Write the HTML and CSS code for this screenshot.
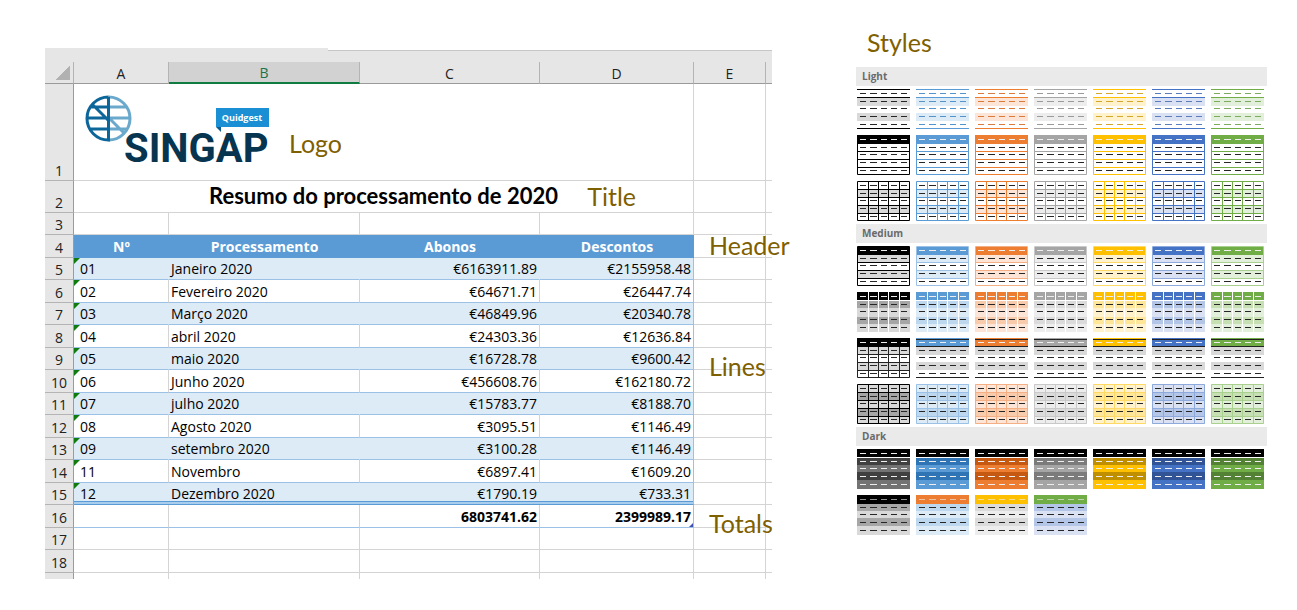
FILE: index.html
```html
<!DOCTYPE html>
<html lang="pt">
<head>
<meta charset="utf-8">
<title>Resumo do processamento de 2020</title>
<link rel="stylesheet" href="styles.css">
</head>
<body>
<svg class="defs" aria-hidden="true">
  <defs>
    <path id="d1" d="M3 4.5h6m4 0h7m4 0h6m4 0h6m4 0h6"/>
    <path id="body-dashes" d="M3 12.5h6m4 0h7m4 0h6m4 0h6m4 0h6M3 19.5h6m4 0h7m4 0h6m4 0h6m4 0h6M3 27.5h6m4 0h7m4 0h6m4 0h6m4 0h6M3 35.5h6m4 0h7m4 0h6m4 0h6m4 0h6"/>
    <path id="grid" d="M.5 .5h52v39h-52zM0 8.5h53M0 16.5h53M0 24.5h53M0 32.5h53M11.5 0v40M21.5 0v40M31.5 0v40M42.5 0v40"/>
    <symbol id="light1" viewBox="0 0 53 40">
      <path class="fill-l" d="M0 9h53v8H0zM0 24h53v8H0z"/>
      <path class="line-c" d="M0 .5h53M0 8.5h53M0 39.5h53"/>
      <use href="#d1" class="dash-t"/><use href="#body-dashes" class="dash-t"/>
    </symbol>
    <symbol id="light2" viewBox="0 0 53 40">
      <path class="fill-c" d="M0 0h53v9H0z"/>
      <path class="line-c" d="M.5 .5h52v39h-52zM0 16.5h53M0 24.5h53M0 32.5h53"/>
      <use href="#d1" class="dash-w"/><use href="#body-dashes" class="dash-k"/>
    </symbol>
    <symbol id="light3" viewBox="0 0 53 40">
      <path class="fill-l" d="M0 9h53v8H0zM0 24h53v8H0z"/>
      <use href="#grid" class="line-c"/>
      <use href="#d1" class="dash-k"/><use href="#body-dashes" class="dash-k"/>
    </symbol>
    <symbol id="medium1" viewBox="0 0 53 40">
      <path class="fill-l" d="M0 9h53v8H0zM0 24h53v8H0z"/>
      <path class="line-b" d="M.5 .5h52v39h-52zM0 16.5h53M0 24.5h53M0 32.5h53"/>
      <path class="fill-c" d="M1 1h51v8H1z"/>
      <use href="#d1" class="dash-w"/><use href="#body-dashes" class="dash-k"/>
    </symbol>
    <symbol id="medium2" viewBox="0 0 53 40">
      <path class="fill-l" d="M0 8h53v32H0z"/>
      <path class="fill-m" d="M0 9h53v7H0zM0 25h53v7H0z"/>
      <path class="fill-c" d="M0 0h53v8H0z"/>
      <path class="line-w" d="M0 8.5h53M11.5 0v40M21.5 0v40M31.5 0v40M42.5 0v40"/>
      <use href="#d1" class="dash-w"/><use href="#body-dashes" class="dash-k"/>
    </symbol>
    <symbol id="medium3" viewBox="0 0 53 40">
      <path class="fill-g" d="M0 9h53v8H0zM0 24h53v8H0z"/>
      <path class="fill-c" d="M0 0h53v9H0z"/>
      <path class="line-k" d="M0 1.5h53M0 8.5h53M0 39.5h53"/>
      <use href="#d1" class="dash-w"/><use href="#body-dashes" class="dash-k"/>
    </symbol>
    <symbol id="medium3-grid" viewBox="0 0 53 40">
      <path class="fill-g" d="M0 9h53v8H0zM0 24h53v8H0z"/>
      <use href="#grid" class="line-k"/>
      <path class="fill-c" d="M0 0h53v9H0z"/>
      <use href="#d1" class="dash-w"/><use href="#body-dashes" class="dash-k"/>
    </symbol>
    <symbol id="medium4" viewBox="0 0 53 40">
      <path class="fill-l" d="M0 0h53v40H0z"/>
      <path class="fill-m" d="M0 8h53v8H0zM0 24h53v8H0z"/>
      <use href="#grid" class="line-b"/>
      <use href="#d1" class="dash-k"/><use href="#body-dashes" class="dash-k"/>
    </symbol>
    <symbol id="dark1" viewBox="0 0 53 40">
      <path class="fill-e" d="M0 9h53v31H0z"/>
      <path class="fill-d" d="M0 9h53v7H0zM0 23h53v8H0z"/>
      <path d="M0 0h53v8H0z"/>
      <use href="#d1" class="dash-w"/><use href="#body-dashes" class="dash-w"/>
    </symbol>
    <symbol id="dark2" viewBox="0 0 53 40">
      <path class="fill-l" d="M0 9h53v31H0z"/>
      <path class="fill-m" d="M0 9h53v7H0zM0 23h53v8H0z"/>
      <path class="fill-h" d="M0 0h53v9H0z"/>
      <use href="#d1" class="dash-w dim"/><use href="#body-dashes" class="dash-k"/>
    </symbol>
  </defs>
</svg>
<main class="page">
  <section class="sheet">
    <table>
      <colgroup><col class="c-num"><col class="c-a"><col class="c-b"><col class="c-c"><col class="c-d"><col class="c-e"><col></colgroup>
      <thead>
        <tr class="strip"><td colspan="7"></td></tr>
        <tr class="letters"><th class="corner"></th><th>A</th><th class="active">B</th><th>C</th><th>D</th><th>E</th><th></th></tr>
      </thead>
      <tbody>
        <tr class="logo-row"><th>1</th><td colspan="4">
          <div class="brand">
            <svg class="logo" width="190" height="84" viewBox="0 0 190 84" role="img" aria-label="Quidgest SINGAP">
              <g fill="none" stroke-width="3">
                <path stroke="#6aa9cb" d="M24.500 5a21.500 21.500 0 0 1 0 43M25 15h17M25 26h21M25 37h17M25 26l16 16"/>
                <path stroke="#0c6699" d="M24.500 5a21.500 21.500 0 0 0 0 43V5M24 15H7M24 26H3M24 37H7M8 12l16 16"/>
              </g>
              <text class="logo-name" x="40" y="70">SINGAP</text>
              <path fill="#1a8fd4" d="M132 16h53v19h-53z"/>
              <path fill="#0d5c91" d="M132 35h5v5z"/>
              <text class="logo-tag" x="158" y="29" text-anchor="middle">Quidgest</text>
            </svg>
            <span class="note">Logo</span>
          </div></td><td></td><td></td></tr>
        <tr class="title-row"><th>2</th><td colspan="4">Resumo do processamento de 2020<span class="note over title-note">Title</span></td><td></td><td></td></tr>
        <tr class="gap-row"><th>3</th><td></td><td></td><td></td><td></td><td></td><td></td></tr>
        <tr class="head"><th>4</th><th scope="col">Nº</th><th scope="col">Processamento</th><th scope="col">Abonos</th><th scope="col">Descontos</th><td><span class="note over">Header</span></td><td></td></tr>
        <tr class="line band"><th>5</th><td>01</td><td>Janeiro 2020</td><td>€6163911.89</td><td>€2155958.48</td><td></td><td></td></tr>
        <tr class="line"><th>6</th><td>02</td><td>Fevereiro 2020</td><td>€64671.71</td><td>€26447.74</td><td></td><td></td></tr>
        <tr class="line band"><th>7</th><td>03</td><td>Março 2020</td><td>€46849.96</td><td>€20340.78</td><td></td><td></td></tr>
        <tr class="line"><th>8</th><td>04</td><td>abril 2020</td><td>€24303.36</td><td>€12636.84</td><td></td><td></td></tr>
        <tr class="line band"><th>9</th><td>05</td><td>maio 2020</td><td>€16728.78</td><td>€9600.42</td><td><span class="note over low">Lines</span></td><td></td></tr>
        <tr class="line"><th>10</th><td>06</td><td>Junho 2020</td><td>€456608.76</td><td>€162180.72</td><td></td><td></td></tr>
        <tr class="line band"><th>11</th><td>07</td><td>julho 2020</td><td>€15783.77</td><td>€8188.70</td><td></td><td></td></tr>
        <tr class="line"><th>12</th><td>08</td><td>Agosto 2020</td><td>€3095.51</td><td>€1146.49</td><td></td><td></td></tr>
        <tr class="line band"><th>13</th><td>09</td><td>setembro 2020</td><td>€3100.28</td><td>€1146.49</td><td></td><td></td></tr>
        <tr class="line"><th>14</th><td>11</td><td>Novembro</td><td>€6897.41</td><td>€1609.20</td><td></td><td></td></tr>
        <tr class="line band last"><th>15</th><td>12</td><td>Dezembro 2020</td><td>€1790.19</td><td>€733.31</td><td></td><td></td></tr>
        <tr class="total"><th>16</th><td></td><td></td><td>6803741.62</td><td>2399989.17</td><td><span class="note over low">Totals</span></td><td></td></tr>
        <tr><th>17</th><td></td><td></td><td></td><td></td><td></td><td></td></tr>
        <tr><th>18</th><td></td><td></td><td></td><td></td><td></td><td></td></tr>
        <tr class="cut"><th></th><td></td><td></td><td></td><td></td><td></td><td></td></tr>
      </tbody>
    </table>
  </section>
  <aside class="styles">
    <h2 class="note">Styles</h2>
    <h3>Light</h3>
    <div class="swatches">
      <button class="black" aria-label="Light 1"><svg><use href="#light1"/></svg></button>
      <button class="blue" aria-label="Light 2"><svg><use href="#light1"/></svg></button>
      <button class="orange" aria-label="Light 3"><svg><use href="#light1"/></svg></button>
      <button class="gray" aria-label="Light 4"><svg><use href="#light1"/></svg></button>
      <button class="gold" aria-label="Light 5"><svg><use href="#light1"/></svg></button>
      <button class="navy" aria-label="Light 6"><svg><use href="#light1"/></svg></button>
      <button class="green" aria-label="Light 7"><svg><use href="#light1"/></svg></button>
      <button class="black" aria-label="Light 8"><svg><use href="#light2"/></svg></button>
      <button class="blue" aria-label="Light 9"><svg><use href="#light2"/></svg></button>
      <button class="orange" aria-label="Light 10"><svg><use href="#light2"/></svg></button>
      <button class="gray" aria-label="Light 11"><svg><use href="#light2"/></svg></button>
      <button class="gold" aria-label="Light 12"><svg><use href="#light2"/></svg></button>
      <button class="navy" aria-label="Light 13"><svg><use href="#light2"/></svg></button>
      <button class="green" aria-label="Light 14"><svg><use href="#light2"/></svg></button>
      <button class="black" aria-label="Light 15"><svg><use href="#light3"/></svg></button>
      <button class="blue" aria-label="Light 16"><svg><use href="#light3"/></svg></button>
      <button class="orange" aria-label="Light 17"><svg><use href="#light3"/></svg></button>
      <button class="gray" aria-label="Light 18"><svg><use href="#light3"/></svg></button>
      <button class="gold" aria-label="Light 19"><svg><use href="#light3"/></svg></button>
      <button class="navy" aria-label="Light 20"><svg><use href="#light3"/></svg></button>
      <button class="green" aria-label="Light 21"><svg><use href="#light3"/></svg></button>
    </div>
    <h3>Medium</h3>
    <div class="swatches">
      <button class="black" aria-label="Medium 1"><svg><use href="#medium1"/></svg></button>
      <button class="blue" aria-label="Medium 2"><svg><use href="#medium1"/></svg></button>
      <button class="orange" aria-label="Medium 3"><svg><use href="#medium1"/></svg></button>
      <button class="gray" aria-label="Medium 4"><svg><use href="#medium1"/></svg></button>
      <button class="gold" aria-label="Medium 5"><svg><use href="#medium1"/></svg></button>
      <button class="navy" aria-label="Medium 6"><svg><use href="#medium1"/></svg></button>
      <button class="green" aria-label="Medium 7"><svg><use href="#medium1"/></svg></button>
      <button class="black" aria-label="Medium 8"><svg><use href="#medium2"/></svg></button>
      <button class="blue" aria-label="Medium 9"><svg><use href="#medium2"/></svg></button>
      <button class="orange" aria-label="Medium 10"><svg><use href="#medium2"/></svg></button>
      <button class="gray" aria-label="Medium 11"><svg><use href="#medium2"/></svg></button>
      <button class="gold" aria-label="Medium 12"><svg><use href="#medium2"/></svg></button>
      <button class="navy" aria-label="Medium 13"><svg><use href="#medium2"/></svg></button>
      <button class="green" aria-label="Medium 14"><svg><use href="#medium2"/></svg></button>
      <button class="black" aria-label="Medium 15"><svg><use href="#medium3-grid"/></svg></button>
      <button class="blue" aria-label="Medium 16"><svg><use href="#medium3"/></svg></button>
      <button class="orange" aria-label="Medium 17"><svg><use href="#medium3"/></svg></button>
      <button class="gray" aria-label="Medium 18"><svg><use href="#medium3"/></svg></button>
      <button class="gold" aria-label="Medium 19"><svg><use href="#medium3"/></svg></button>
      <button class="navy" aria-label="Medium 20"><svg><use href="#medium3"/></svg></button>
      <button class="green" aria-label="Medium 21"><svg><use href="#medium3"/></svg></button>
      <button class="black" aria-label="Medium 22"><svg><use href="#medium4"/></svg></button>
      <button class="blue" aria-label="Medium 23"><svg><use href="#medium4"/></svg></button>
      <button class="orange" aria-label="Medium 24"><svg><use href="#medium4"/></svg></button>
      <button class="gray" aria-label="Medium 25"><svg><use href="#medium4"/></svg></button>
      <button class="gold" aria-label="Medium 26"><svg><use href="#medium4"/></svg></button>
      <button class="navy" aria-label="Medium 27"><svg><use href="#medium4"/></svg></button>
      <button class="green" aria-label="Medium 28"><svg><use href="#medium4"/></svg></button>
    </div>
    <h3>Dark</h3>
    <div class="swatches">
      <button class="black" aria-label="Dark 1"><svg><use href="#dark1"/></svg></button>
      <button class="blue" aria-label="Dark 2"><svg><use href="#dark1"/></svg></button>
      <button class="orange" aria-label="Dark 3"><svg><use href="#dark1"/></svg></button>
      <button class="gray" aria-label="Dark 4"><svg><use href="#dark1"/></svg></button>
      <button class="gold" aria-label="Dark 5"><svg><use href="#dark1"/></svg></button>
      <button class="navy" aria-label="Dark 6"><svg><use href="#dark1"/></svg></button>
      <button class="green" aria-label="Dark 7"><svg><use href="#dark1"/></svg></button>
      <button class="black" aria-label="Dark 8"><svg><use href="#dark2"/></svg></button>
      <button class="blue head-orange" aria-label="Dark 9"><svg><use href="#dark2"/></svg></button>
      <button class="gray head-gold" aria-label="Dark 10"><svg><use href="#dark2"/></svg></button>
      <button class="navy head-green" aria-label="Dark 11"><svg><use href="#dark2"/></svg></button>
    </div>
  </aside>
</main>
</body>
</html>
```
FILE: styles.css
```css
* { box-sizing: border-box; }
body {
  margin: 0;
  background: #fff;
  color: #000;
  font: 14px/18px "Open Sans", "Noto Sans", sans-serif;
}
.defs { position: absolute; width: 0; height: 0; }
.page {
  display: grid;
  grid-template-columns: 727fr 411fr;
  column-gap: 84px;
  align-items: start;
  padding: 27px 30px 28px 45px;
}
.note {
  color: #7f6000;
  font: 400 25px/30px Lato, "Open Sans", sans-serif;
}

/* Spreadsheet */
.sheet { padding-top: 21px; }
table {
  width: 100%;
  table-layout: fixed;
  border-collapse: separate;
  border-spacing: 0;
}
.c-num { width: 29px; }
.c-a { width: 95px; }
.c-b { width: 191px; }
.c-c { width: 180px; }
.c-d { width: 154px; }
.c-e { width: 72px; }
th, td { padding: 0 2px 1px; vertical-align: bottom; }
td {
  position: relative;
  border-right: 1px solid #d4d4d4;
  border-bottom: 1px solid #d4d4d4;
}
tbody tr { height: 22px; }
tbody tr:nth-child(even) { height: 23px; }
tbody td:last-child { border-right: 0; }
tbody th:first-child {
  padding: 0;
  background: #e6e6e6;
  border-right: 1px solid #9b9b9b;
  border-bottom: 1px solid #b4b4b4;
  color: #222;
  font-weight: 400;
}
.strip { height: 14px; }
.strip td { background: #e6e6e6; border: 0; padding: 0; }
.strip td::after {
  content: "";
  position: absolute;
  top: 0;
  left: 283px;
  right: 0;
  height: 2px;
  background: #fff;
  border-bottom: 1px solid #c6c6c6;
}
.letters { height: 22px; }
.letters th {
  padding: 0;
  background: #e6e6e6;
  border-right: 1px solid #b4b4b4;
  border-bottom: 1px solid #9b9b9b;
  color: #222;
  font-weight: 400;
}
.letters th:last-child { border-right: 0; }
.letters .active {
  background: #d2d2d2;
  border-bottom: 2px solid #107c41;
  color: #217346;
}
.letters .corner {
  background: linear-gradient(135deg, transparent 50%, #b1b1b1 50%) 11px 4px / 14px 14px no-repeat #e6e6e6;
}
tbody .logo-row { height: 97px; }
tbody tr.title-row { height: 32px; }
.title-row td:nth-child(2) {
  font: 700 22px/30px Lato, "Open Sans", sans-serif;
  text-align: center;
}
.brand { display: flex; align-items: center; gap: 15px; padding: 0 0 3px 8px; }
.brand .note { padding-top: 18px; }
.logo { display: block; }
.logo-name { font: 700 40px Roboto, sans-serif; fill: #07344f; }
.logo-tag { font: 700 9px "Open Sans", sans-serif; fill: #fff; }
.over {
  position: absolute;
  z-index: 1;
  left: 15px;
  top: -5px;
}
.low { top: 3px; }
.title-note { left: auto; right: 57px; top: 0; }

tbody tr.head th:not(:first-child) {
  background: #5b9bd5;
  border-bottom: 1px solid #5b9bd5;
  color: #fff;
  font-weight: 700;
}
.line td:nth-child(-n+5) { border-bottom-color: #9bc2e6; }
.line td:nth-child(5), .total td:nth-child(5) { border-right-color: #9bc2e6; }
.band td:nth-child(-n+5) { background: #ddebf7; }
.band td:nth-child(-n+4) { border-right-color: #ddebf7; }
.line td:nth-child(2) { padding-left: 6px; }
.line td:nth-child(2)::before {
  content: "";
  position: absolute;
  top: 0;
  left: 0;
  border: 3px solid transparent;
  border-top-color: #107c10;
  border-left-color: #107c10;
}
.line td:nth-child(4), .line td:nth-child(5),
.total td:nth-child(4), .total td:nth-child(5) { text-align: right; }
.last td:nth-child(-n+5) {
  border-bottom-color: #5b9bd5;
  box-shadow: inset 0 -2px #a9cdec, inset 0 -3px #5b9bd5;
}
.last td:nth-child(-n+4) { border-right: 0; padding-right: 3px; }
.total td:nth-child(-n+5) { border-bottom-color: #9bc2e6; font-weight: 700; }
.total td:nth-child(5)::after {
  content: "";
  position: absolute;
  right: 0;
  bottom: 0;
  border: 2px solid #3f51b5;
  border-top-color: transparent;
  border-left-color: transparent;
}
tbody tr.cut { height: 6px; }
.cut th, .cut td { border-bottom: 0 !important; padding: 0; }

/* Style gallery */
h2, h3 { margin: 0; }
h2.note { padding-left: 11px; margin-bottom: 10px; }
h3 {
  padding-left: 6px;
  background: #eaeaea;
  color: #6a6a6a;
  font: 700 10px/19px "Open Sans", sans-serif;
}
.swatches {
  display: grid;
  grid-template-columns: repeat(7, 1fr);
  gap: 6px;
  padding: 3px 3px 3px 1px;
}
.swatches button {
  padding: 0;
  border: 0;
  background: none;
  cursor: pointer;
}
.swatches svg { display: block; width: 100%; height: 40px; }
.fill-c { fill: var(--c); }
.fill-l { fill: var(--l); }
.fill-m { fill: var(--m); }
.fill-d { fill: var(--d); }
.fill-e { fill: var(--e, var(--c)); }
.fill-h { fill: var(--h, var(--c)); }
.fill-g { fill: #d9d9d9; }
.line-c, .line-b, .line-w, .line-k { fill: none; }
.line-c { stroke: var(--c); }
.line-b { stroke: var(--b); }
.line-w { stroke: #fff; }
.line-k { stroke: #222; }
.dash-t { stroke: var(--t); }
.dash-w { stroke: #eee; }
.dash-k { stroke: #262626; }
.dim { stroke-opacity: .6; }
.black { --c: #000; --l: #d9d9d9; --m: #a6a6a6; --b: #000; --d: #404040; --e: #737373; --t: #262626; }
.blue { --c: #5b9bd5; --l: #ddebf7; --m: #bdd7ee; --b: #9bc2e6; --d: #2f75b5; --t: #5593cb; }
.orange { --c: #ed7d31; --l: #fce4d6; --m: #f8cbad; --b: #f4b084; --d: #c65911; --t: #db7a3b; }
.gray { --c: #a5a5a5; --l: #ededed; --m: #dbdbdb; --b: #c9c9c9; --d: #7b7b7b; --t: #9a9a9a; }
.gold { --c: #ffc000; --l: #fff2cc; --m: #ffe699; --b: #ffd966; --d: #bf8f00; --t: #d3a62c; }
.navy { --c: #4472c4; --l: #d9e1f2; --m: #b4c6e7; --b: #8ea9db; --d: #305496; --t: #5b7dbb; }
.green { --c: #70ad47; --l: #e2efda; --m: #c6e0b4; --b: #a9d08e; --d: #548235; --t: #7dab60; }
.head-orange { --h: #ed7d31; }
.head-gold { --h: #ffc000; }
.head-green { --h: #70ad47; }
```
